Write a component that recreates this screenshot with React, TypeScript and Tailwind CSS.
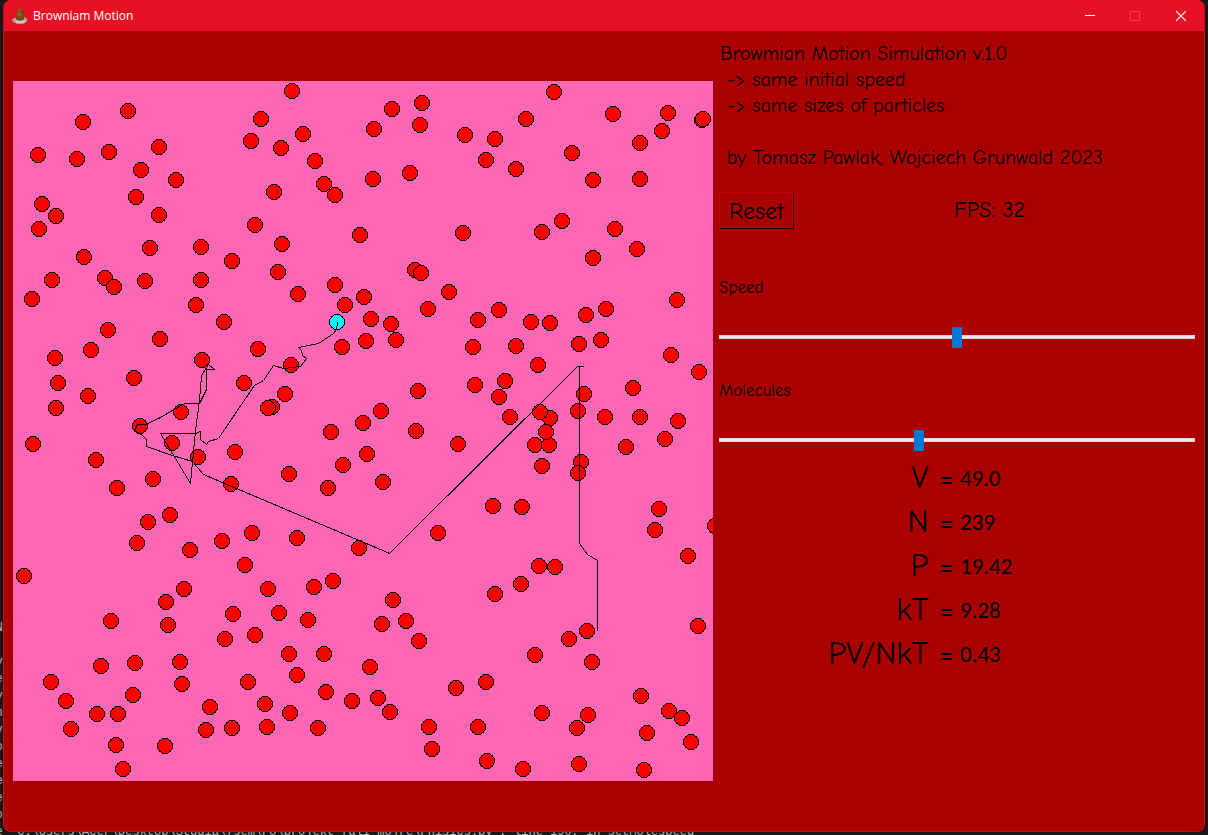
import { useState } from 'react';

type Point = [number, number];

const PARTICLES: Point[] = [
  [292, 91], [83, 122], [128, 111], [261, 119], [251, 141], [281, 148], [303, 134], [315, 161],
  [38, 155], [77, 159], [109, 152], [159, 147], [141, 170], [176, 180], [324, 184], [335, 195],
  [274, 192], [42, 204], [56, 216], [39, 229], [136, 197], [159, 215], [255, 225], [282, 244],
  [360, 235], [84, 257], [150, 248], [201, 247], [232, 261], [278, 272], [52, 280], [105, 278],
  [114, 287], [145, 281], [201, 280], [298, 294], [335, 285], [554, 92], [422, 103], [392, 109],
  [374, 129], [420, 125], [526, 119], [465, 135], [495, 139], [486, 160], [516, 169], [613, 114],
  [668, 113], [702, 120], [703, 119], [662, 131], [640, 143], [572, 153], [593, 180], [640, 179],
  [410, 173], [373, 179], [463, 233], [562, 221], [542, 232], [615, 229], [637, 249], [593, 258],
  [415, 270], [421, 273], [449, 292], [364, 297], [428, 309], [371, 319], [391, 324], [366, 341],
  [396, 340], [478, 320], [499, 310], [531, 322], [550, 323], [586, 315], [606, 309], [677, 300],
  [473, 347], [516, 346], [579, 344], [601, 340], [671, 355], [32, 299], [196, 305], [224, 322],
  [108, 330], [91, 350], [160, 339], [55, 358], [58, 383], [56, 408], [88, 396], [134, 378],
  [202, 360], [258, 349], [345, 305], [342, 347], [291, 365], [244, 383], [285, 394], [272, 407],
  [268, 408], [181, 412], [140, 426], [172, 443], [198, 457], [33, 444], [96, 460], [117, 488],
  [153, 479], [235, 452], [331, 432], [289, 474], [343, 465], [328, 488], [231, 484], [170, 515],
  [148, 522], [137, 543], [190, 550], [222, 541], [252, 533], [297, 538], [245, 565], [359, 548],
  [538, 365], [505, 381], [475, 385], [499, 397], [584, 394], [633, 388], [699, 372], [418, 391],
  [381, 411], [363, 423], [416, 431], [367, 454], [383, 482], [458, 444], [510, 417], [550, 418],
  [540, 412], [535, 445], [549, 445], [546, 432], [542, 466], [578, 411], [605, 417], [640, 417],
  [678, 421], [665, 439], [626, 447], [581, 462], [578, 473], [493, 506], [522, 507], [438, 533],
  [659, 509], [655, 530], [715, 526], [688, 556], [539, 566], [555, 567], [24, 576], [184, 589],
  [166, 602], [111, 621], [168, 625], [268, 589], [233, 614], [279, 613], [308, 620], [314, 587],
  [333, 581], [225, 639], [255, 635], [101, 666], [135, 663], [180, 662], [182, 684], [51, 682],
  [66, 701], [133, 695], [97, 714], [118, 714], [71, 729], [116, 745], [123, 769], [165, 746],
  [210, 707], [206, 730], [232, 728], [248, 682], [265, 704], [267, 727], [289, 654], [324, 654],
  [297, 675], [326, 692], [290, 713], [318, 728], [352, 701], [393, 600], [382, 624], [406, 621],
  [419, 641], [370, 667], [378, 698], [390, 712], [456, 688], [486, 682], [429, 727], [432, 749],
  [478, 727], [487, 761], [523, 769], [495, 594], [521, 584], [587, 631], [569, 639], [535, 655],
  [592, 662], [698, 626], [542, 713], [588, 715], [577, 728], [579, 764], [641, 696], [669, 711],
  [682, 718], [647, 733], [691, 742], [644, 770],
];

const TRACE: Point[] = [
  [337, 322], [336, 329], [333, 333], [318, 343], [298, 347], [301, 350], [302, 355], [306, 358],
  [300, 366], [283, 368], [273, 365], [263, 380], [254, 385], [243, 401], [218, 438], [208, 441],
  [206, 444], [200, 439], [200, 431], [195, 433], [160, 433], [190, 483], [195, 430], [199, 400],
  [201, 375], [208, 364], [214, 369], [206, 369], [206, 389], [199, 403], [184, 403], [160, 417],
  [145, 424], [137, 424], [134, 430], [142, 435], [146, 439], [146, 446], [172, 455], [192, 461],
  [197, 467], [203, 474], [387, 552], [389, 553], [577, 366], [583, 366], [579, 366], [579, 543],
  [587, 554], [597, 560], [597, 630],
];

const READINGS = [
  { name: 'V', value: '49.0' },
  { name: 'N', value: '239' },
  { name: 'P', value: '19.42' },
  { name: 'kT', value: '9.28' },
  { name: 'PV/NkT', value: '0.43' },
];

const TERMINAL = `   N

   v
   e
   v
   n
   v
   o
   e
   e
   e
   o
   e "C:\\Users\\Acer\\Desktop\\Studia\\7sem\\Fo\\projekt fali mojre\\Phisics.py", line 190, in setMolespeed`;

function AppIcon() {
  return (
    <svg className="size-4" viewBox="0 0 16 16" aria-hidden="true">
      <path d="M0 11.5 3 9.5 5 11l3-1.5 3 1 2-1.5 2.5 2.5-1 2.5-4 1.500H5l-4-1.500z" fill="#a9a29a" />
      <path d="M3 14.500 5 12l3.500 1L12 11.500l2 2-2 2H5z" fill="#c9c5bd" />
      <path d="M4 11.500v-7C4 2 5.500.5 8 .5s4 1.500 4 4v7c-2 1.300-6 1.300-8 0z" fill="#824318" />
      <path d="M5 5c0-2 1-3.500 3-3.500 1 0 1.500.5 1.500 1L6.500 8 5 9z" fill="#9c5a28" />
      <ellipse cx="8.500" cy="6.500" rx="1.800" ry="1.200" fill="#a8584a" />
      <path d="M6.500 3.500h1v1h-1zM9.500 3.500h1v1h-1z" fill="#3c2010" />
    </svg>
  );
}

function TitleBar() {
  return (
    <header className="flex h-[31px] items-center bg-[#e81123] pl-2 font-['Open_Sans','Noto_Sans',sans-serif] text-xs text-white">
      <AppIcon />
      <h1 className="ml-[5px] flex-1">Browniam Motion</h1>
      <button type="button" aria-label="Minimize" className="flex h-full w-[45px] items-center justify-center">
        <svg className="size-[10px]" viewBox="0 0 10 10" aria-hidden="true">
          <path d="M0 4.500h10" stroke="#fff" />
        </svg>
      </button>
      <button type="button" aria-label="Maximize" disabled className="flex h-full w-[45px] items-center justify-center">
        <svg className="size-[10px]" viewBox="0 0 10 10" aria-hidden="true">
          <rect x="0.500" y="0.500" width="9" height="9" rx="0.500" fill="none" stroke="#f4404f" />
        </svg>
      </button>
      <button type="button" aria-label="Close" className="flex h-full w-[47px] items-center justify-center">
        <svg className="size-[10px]" viewBox="0 0 10 10" aria-hidden="true">
          <path d="M0 0l10 10M10 0L0 10" stroke="#fff" strokeWidth="1.100" />
        </svg>
      </button>
    </header>
  );
}

function Simulation() {
  return (
    <svg
      className="mt-[50px] w-[700px] shrink-0 bg-[#ff66b3]"
      viewBox="13 81 700 700"
      role="img"
      aria-label="Particles in a box with the traced path of one particle"
      shapeRendering="crispEdges"
    >
      <g fill="#f00" stroke="#000">
        {PARTICLES.map(([x, y]) => (
          <circle key={`${x}-${y}`} cx={x} cy={y} r="7.500" />
        ))}
        <circle cx="337" cy="322" r="7.500" fill="#0ff" />
      </g>
      <polyline
        transform="translate(0.500 0.500)"
        points={TRACE.map((p) => p.join(',')).join(' ')}
        fill="none"
        stroke="#000"
      />
    </svg>
  );
}

function Slider({ id, label, initial }: { id: string; label: string; initial: number }) {
  const [value, setValue] = useState(initial);
  return (
    <div className="flex h-[103px] flex-col">
      <label htmlFor={id} className="text-[17px] leading-6">{label}</label>
      <input
        id={id}
        type="range"
        min={0}
        max={1000}
        value={value}
        onChange={(e) => setValue(Number(e.target.value))}
        className="mt-[26px] h-[22px] w-full appearance-none bg-transparent [&::-webkit-slider-runnable-track]:h-1 [&::-webkit-slider-runnable-track]:border [&::-webkit-slider-runnable-track]:border-[#d6d6d6] [&::-webkit-slider-runnable-track]:bg-[#e7eaea] [&::-webkit-slider-thumb]:-mt-[9px] [&::-webkit-slider-thumb]:h-[21px] [&::-webkit-slider-thumb]:w-[10px] [&::-webkit-slider-thumb]:appearance-none [&::-webkit-slider-thumb]:bg-[#0078d7]"
      />
    </div>
  );
}

function Controls() {
  return (
    <section className="min-w-0 flex-1 pr-[9px] pl-[6px] pt-[10px] font-['Comic_Sans_MS','Comic_Neue','Open_Sans',sans-serif] text-black">
      <div className="pl-px text-xl leading-[26px] whitespace-pre">
        <p>Browmian Motion Simulation v.1.0</p>
        <p>{' -> same initial speed'}</p>
        <p>{' -> same sizes of particles'}</p>
        <p className="mt-[26px]">{' by Tomasz Pawlak, Wojciech Grunwald 2023'}</p>
      </div>
      <div className="mt-[21px] flex h-[37px] items-center">
        <button
          type="button"
          className="h-full w-[75px] border border-t-[#c80000] border-r-[#2a0000] border-b-[#2a0000] border-l-[#c80000] text-2xl"
        >
          Reset
        </button>
        <p className="ml-40 text-[22px]">FPS: 32</p>
      </div>
      <div className="mt-[47px]">
        <Slider id="speed" label="Speed" initial={499} />
        <Slider id="molecules" label="Molecules" initial={418} />
      </div>
      <dl className="mt-[-26px]">
        {READINGS.map(({ name, value }) => (
          <div key={name} className="flex h-11 items-center">
            <dt className="w-[235px] text-right text-[32px] whitespace-pre">{name} =</dt>
            <dd className="ml-[6px] font-['Carlito','Lato',sans-serif] text-[23px]">{value}</dd>
          </div>
        ))}
      </dl>
    </section>
  );
}

export default function App() {
  return (
    <div className="relative min-h-screen overflow-hidden bg-[#181818] px-[3px] pb-[3px]">
      <pre
        aria-hidden="true"
        className="absolute bottom-[-6px] left-[-26px] font-['Liberation_Mono',monospace] text-xs leading-[17px] text-[#b4b4b4]"
      >
        {TERMINAL}
      </pre>
      <main className="relative flex min-h-[calc(100vh-3px)] flex-col overflow-hidden rounded-lg border border-t-0 border-[#c80a1a] bg-[#aa0000]">
        <TitleBar />
        <div className="flex flex-1 items-start pl-[9px]">
          <Simulation />
          <Controls />
        </div>
      </main>
    </div>
  );
}
